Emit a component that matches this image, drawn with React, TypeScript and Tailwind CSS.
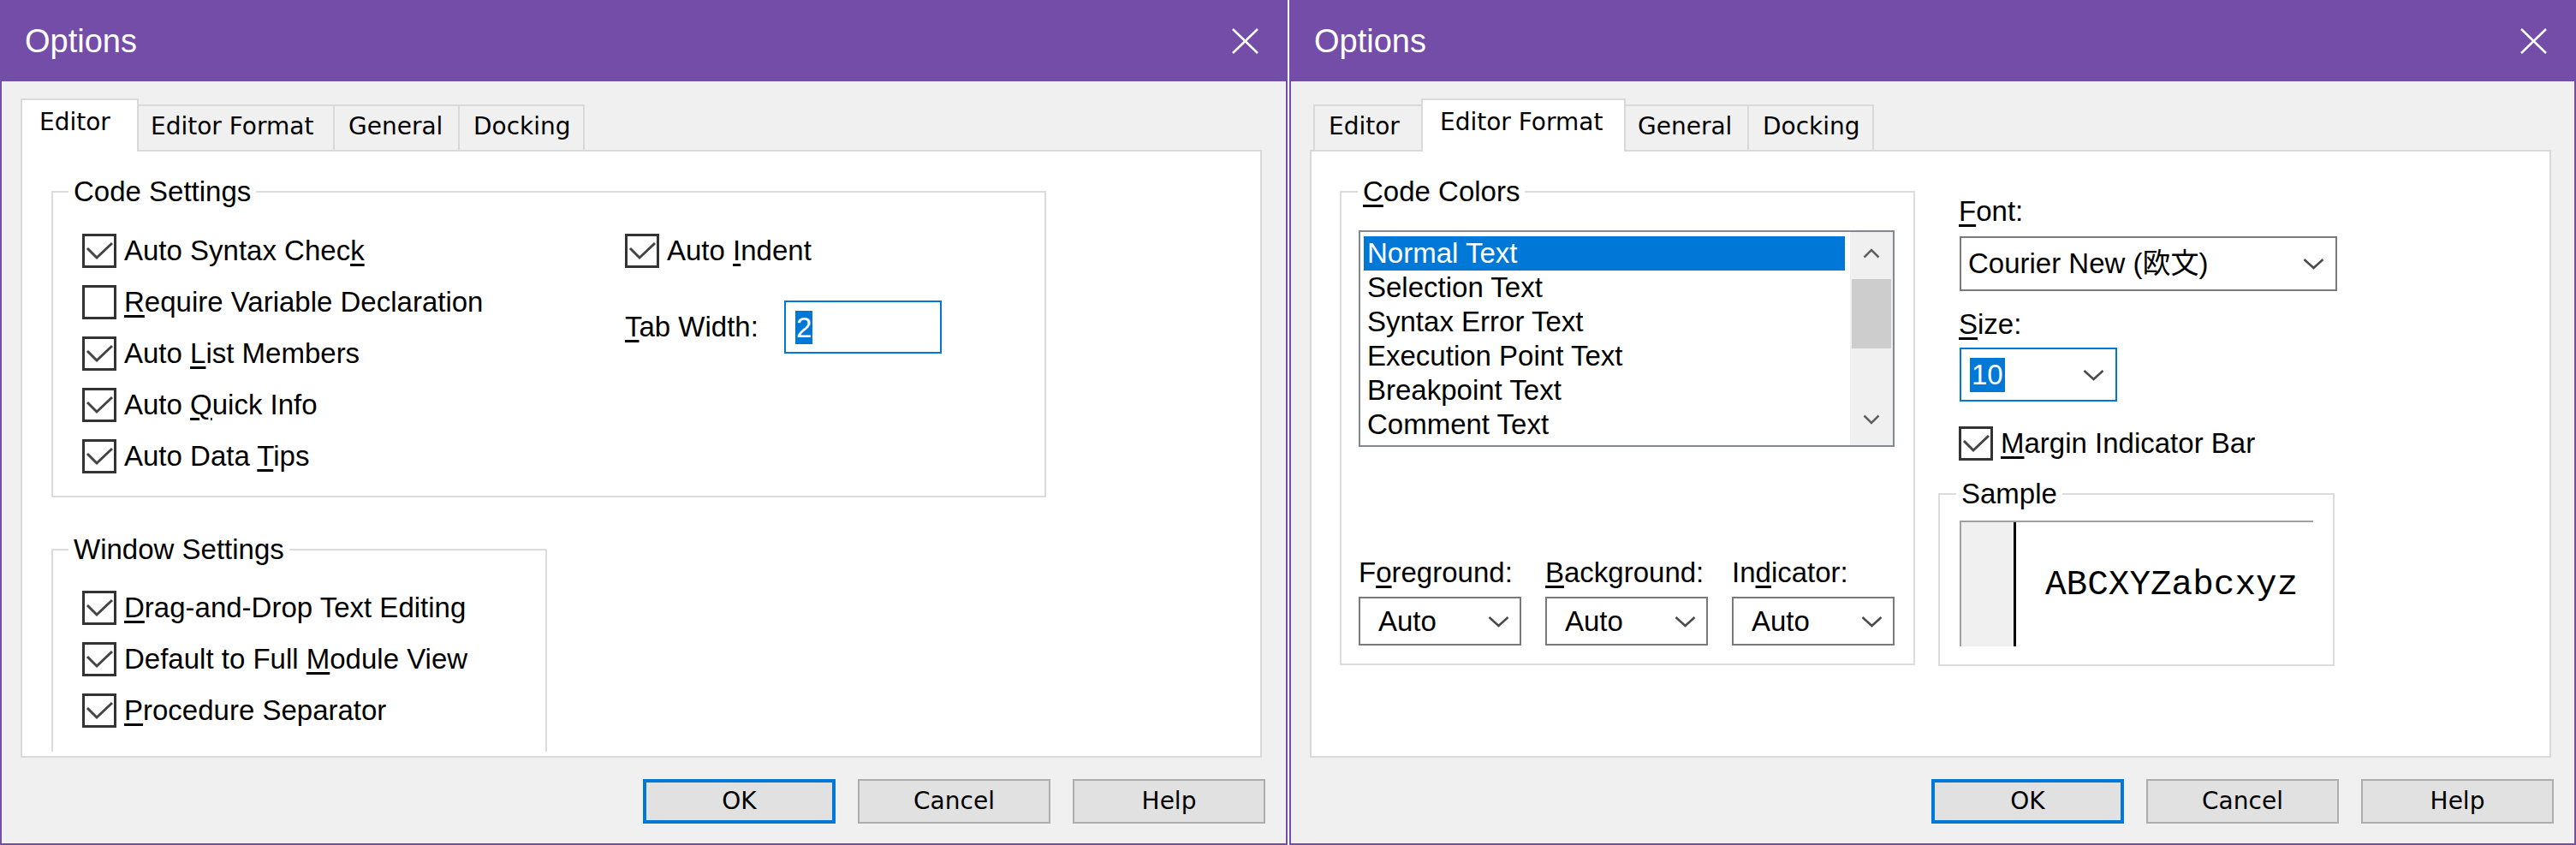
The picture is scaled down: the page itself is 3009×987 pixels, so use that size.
import React from 'react';

const tabs = [
  { label: 'Editor', w: 'w-[130px]', wa: 'w-[138px]' },
  { label: 'Editor Format', w: 'w-[231px]', wa: 'w-[239px]' },
  { label: 'General', w: 'w-[146px]', wa: 'w-[154px]' },
  { label: 'Docking', w: 'w-[148px]', wa: 'w-[156px]' },
];

const colorItems = [
  'Normal Text',
  'Selection Text',
  'Syntax Error Text',
  'Execution Point Text',
  'Breakpoint Text',
  'Comment Text',
];

// underlined access key
function K({ children }: { children: React.ReactNode }) {
  return <u className="underline decoration-3 underline-offset-4">{children}</u>;
}

function Check({ checked }: { checked: boolean }) {
  return (
    <span className="flex h-[40px] w-[40px] shrink-0 items-center justify-center border-[3px] border-[#333333] bg-white">
      {checked && (
        <svg width="34" height="34" viewBox="0 0 34 34">
          <polyline points="3,14 14,25 32,8" fill="none" stroke="#444444" strokeWidth="3" />
        </svg>
      )}
    </span>
  );
}

function CheckRow({ checked, className = '', children }: { checked: boolean; className?: string; children: React.ReactNode }) {
  return (
    <div className={`flex h-[40px] items-center gap-[9px] whitespace-nowrap ${className}`}>
      <Check checked={checked} />
      <span>{children}</span>
    </div>
  );
}

function Group({ title, legendPad, className = '', children }: { title: React.ReactNode; legendPad: string; className?: string; children: React.ReactNode }) {
  return (
    <fieldset className={`shrink-0 border-2 border-[#dcdcdc] ${className}`}>
      <legend className={`px-[6px] leading-[40px] whitespace-nowrap ${legendPad}`}>{title}</legend>
      {children}
    </fieldset>
  );
}

function Chevron() {
  return (
    <svg width="25" height="14" viewBox="0 0 25 14" className="shrink-0">
      <polyline points="1.5,2 12.5,12 23.5,2" fill="none" stroke="#4a4a4a" strokeWidth="2.5" />
    </svg>
  );
}

function TabStrip({ active }: { active: number }) {
  return (
    <div className="flex h-[60px] items-end pl-[4px] font-['DejaVu_Sans',sans-serif] text-[28px] leading-[32px]">
      {tabs.map((t, i) =>
        i === active ? (
          <div
            key={t.label}
            className={`relative z-10 -mx-[4px] -mb-[2px] h-[62px] shrink-0 whitespace-nowrap border-2 border-b-0 border-[#d9d9d9] bg-white pl-[20px] pt-[10px] ${t.wa}`}
          >
            {t.label}
          </div>
        ) : (
          <div
            key={t.label}
            className={`h-[53px] shrink-0 whitespace-nowrap border-l-2 border-t-2 border-[#d9d9d9] bg-[#f0f0f0] pl-[16px] pt-[8px] ${t.w} ${i === tabs.length - 1 ? 'border-r-2' : ''}`}
          >
            {t.label}
          </div>
        )
      )}
    </div>
  );
}

function Dialog({ active, className, children }: { active: number; className: string; children: React.ReactNode }) {
  return (
    <div className={`flex h-full shrink-0 flex-col border-x-2 border-b-2 border-[#744da9] bg-[#f0f0f0] ${className}`}>
      <div className="flex h-[95px] items-center justify-between bg-[#744da9] pl-[27px] pr-[32px] text-[38px] leading-[44px] text-white">
        <span>Options</span>
        <svg width="31" height="30" viewBox="0 0 31 30">
          <path d="M1 1 L30 29 M30 1 L1 29" stroke="#ffffff" strokeWidth="2.5" fill="none" />
        </svg>
      </div>
      <div className="flex flex-1 flex-col pl-[22px] pt-[20px]">
        <TabStrip active={active} />
        <div className="flex h-[710px] w-[1450px] flex-col border-2 border-[#d9d9d9] bg-white pb-[5px]">
          <div className="flex-1 overflow-hidden">{children}</div>
        </div>
        <div className="flex justify-end gap-[26px] pr-[24px] pt-[25px] font-['DejaVu_Sans',sans-serif] text-[28px] leading-[32px]">
          <div className="flex h-[52px] w-[225px] items-center justify-center border-4 border-[#0078d7] bg-[#e1e1e1]">OK</div>
          <div className="flex h-[52px] w-[225px] items-center justify-center border-2 border-[#adadad] bg-[#e1e1e1]">Cancel</div>
          <div className="flex h-[52px] w-[225px] items-center justify-center border-2 border-[#adadad] bg-[#e1e1e1]">Help</div>
        </div>
      </div>
    </div>
  );
}

function EditorPage() {
  return (
    <div className="flex flex-col pl-[34px] pt-[27px]">
      <Group title="Code Settings" legendPad="ml-[18px]" className="w-[1162px]">
        <div className="flex pb-[26px] pl-[34px] pt-[29px]">
          <div className="flex w-[634px] flex-col gap-[20px]">
            <CheckRow checked>Auto Syntax Chec<K>k</K></CheckRow>
            <CheckRow checked={false}><K>R</K>equire Variable Declaration</CheckRow>
            <CheckRow checked>Auto <K>L</K>ist Members</CheckRow>
            <CheckRow checked>Auto <K>Q</K>uick Info</CheckRow>
            <CheckRow checked>Auto Data <K>T</K>ips</CheckRow>
          </div>
          <div className="flex flex-col">
            <CheckRow checked>Auto <K>I</K>ndent</CheckRow>
            <div className="mt-[38px] flex h-[62px] items-center">
              <span className="w-[186px] whitespace-nowrap"><K>T</K>ab Width:</span>
              <div className="flex h-[62px] w-[184px] items-center border-2 border-[#0078d7] bg-white pl-[11px]">
                <span className="h-[39px] bg-[#0078d7] px-[1px] leading-[39px] text-white">2</span>
              </div>
            </div>
          </div>
        </div>
      </Group>
      <Group title="Window Settings" legendPad="ml-[18px]" className="mt-[41px] w-[579px]">
        <div className="flex flex-col gap-[20px] pb-[60px] pl-[34px] pt-[28px]">
          <CheckRow checked><K>D</K>rag-and-Drop Text Editing</CheckRow>
          <CheckRow checked>Default to Full <K>M</K>odule View</CheckRow>
          <CheckRow checked><K>P</K>rocedure Separator</CheckRow>
        </div>
      </Group>
    </div>
  );
}

function ColorCombo() {
  return (
    <div className="flex h-[57px] items-center justify-between border-2 border-[#7a7a7a] bg-white pl-[21px] pr-[12px]">
      <span>Auto</span>
      <Chevron />
    </div>
  );
}

function FormatPage() {
  return (
    <div className="flex items-start pl-[33px]">
      <Group title={<><K>C</K>ode Colors</>} legendPad="ml-[19px]" className="mt-[27px] w-[672px]">
        <div className="flex flex-col pb-[21px] pl-[20px] pr-[22px] pt-[25px]">
          <div className="flex h-[253px] border-2 border-[#828790] bg-white">
            <div className="flex flex-1 flex-col pl-[4px] pr-[6px] pt-[5px]">
              {colorItems.map((item, i) => (
                <div
                  key={item}
                  className={i === 0 ? 'h-[40px] shrink-0 bg-[#0078d7] pl-[4px] text-white' : 'h-[40px] shrink-0 pl-[4px]'}
                >
                  {item}
                </div>
              ))}
            </div>
            <div className="flex w-[50px] flex-col bg-[#f0f0f0]">
              <div className="flex h-[50px] items-center justify-center">
                <svg width="20" height="12" viewBox="0 0 20 12">
                  <polyline points="1.5,10.5 10,2 18.5,10.5" fill="none" stroke="#606060" strokeWidth="2.5" />
                </svg>
              </div>
              <div className="mx-[2px] mt-[5px] h-[81px] bg-[#cdcdcd]" />
              <div className="flex-1" />
              <div className="flex h-[50px] items-start justify-center pt-[14px]">
                <svg width="20" height="12" viewBox="0 0 20 12">
                  <polyline points="1.5,1.5 10,10 18.5,1.5" fill="none" stroke="#606060" strokeWidth="2.5" />
                </svg>
              </div>
            </div>
          </div>
          <div className="mt-[127px] grid grid-cols-3 gap-x-[28px] gap-y-[8px] whitespace-nowrap">
            <span>F<K>o</K>reground:</span>
            <span><K>B</K>ackground:</span>
            <span>In<K>d</K>icator:</span>
            <ColorCombo />
            <ColorCombo />
            <ColorCombo />
          </div>
        </div>
      </Group>
      <div className="ml-[27px] mt-[50px] flex w-[463px] flex-col">
        <div className="pl-[24px]"><K>F</K>ont:</div>
        <div className="ml-[25px] mt-[9px] flex h-[64px] w-[441px] items-center justify-between border-2 border-[#7a7a7a] bg-white pl-[8px] pr-[13px] whitespace-nowrap">
          <span>Courier New (欧文)</span>
          <Chevron />
        </div>
        <div className="mt-[19px] pl-[24px]"><K>S</K>ize:</div>
        <div className="ml-[25px] mt-[7px] flex h-[63px] w-[184px] items-center justify-between border-2 border-[#0078d7] bg-white pl-[10px] pr-[13px]">
          <span className="h-[40px] bg-[#0078d7] px-[2px] text-white">10</span>
          <Chevron />
        </div>
        <CheckRow checked className="ml-[24px] mt-[29px]"><K>M</K>argin Indicator Bar</CheckRow>
        <Group title="Sample" legendPad="ml-[19px]" className="mt-[19px] w-[463px]">
          <div className="pb-[21px] pl-[23px] pr-[23px] pt-[11px]">
            <div className="flex h-[147px] border-l-2 border-t-2 border-[#a0a0a0]">
              <div className="w-[61px] bg-[#f0f0f0]" />
              <div className="w-[3px] bg-black" />
              <div className="flex flex-1 items-center pl-[34px] font-['Liberation_Mono',monospace] text-[41px] leading-[48px]">
                ABCXYZabcxyz
              </div>
            </div>
          </div>
        </Group>
      </div>
    </div>
  );
}

export default function App() {
  return (
    <div className="flex h-[987px] w-[3009px] gap-[2px] overflow-hidden bg-white font-['Liberation_Sans','Noto_Sans_CJK_JP',sans-serif] text-[33px] leading-[40px] text-black">
      <Dialog active={0} className="w-[1504px]">
        <EditorPage />
      </Dialog>
      <Dialog active={1} className="w-[1503px]">
        <FormatPage />
      </Dialog>
    </div>
  );
}
